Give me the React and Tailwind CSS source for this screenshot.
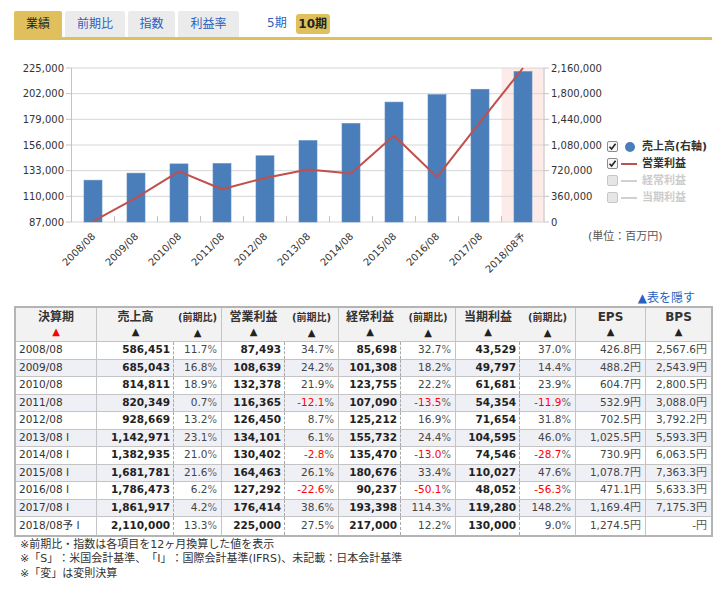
import React from "react";

const sales = [586451, 685043, 814811, 820349, 928669, 1142971, 1382935, 1681781, 1786473, 1861917, 2110000];
const op = [87493, 108639, 132378, 116365, 126450, 134101, 130402, 164463, 127292, 176414, 225000];
const labels = ["2008/08", "2009/08", "2010/08", "2011/08", "2012/08", "2013/08", "2014/08", "2015/08", "2016/08", "2017/08", "2018/08予"];
const leftTicks = ["225,000", "202,000", "179,000", "156,000", "133,000", "110,000", "87,000"];
const rightTicks = ["2,160,000", "1,800,000", "1,440,000", "1,080,000", "720,000", "360,000", "0"];

const rows = [
  ["2008/08", "586,451", "11.7", "87,493", "34.7", "85,698", "32.7", "43,529", "37.0", "426.8", "2,567.6"],
  ["2009/08", "685,043", "16.8", "108,639", "24.2", "101,308", "18.2", "49,797", "14.4", "488.2", "2,543.9"],
  ["2010/08", "814,811", "18.9", "132,378", "21.9", "123,755", "22.2", "61,681", "23.9", "604.7", "2,800.5"],
  ["2011/08", "820,349", "0.7", "116,365", "-12.1", "107,090", "-13.5", "54,354", "-11.9", "532.9", "3,088.0"],
  ["2012/08", "928,669", "13.2", "126,450", "8.7", "125,212", "16.9", "71,654", "31.8", "702.5", "3,792.2"],
  ["2013/08 I", "1,142,971", "23.1", "134,101", "6.1", "155,732", "24.4", "104,595", "46.0", "1,025.5", "5,593.3"],
  ["2014/08 I", "1,382,935", "21.0", "130,402", "-2.8", "135,470", "-13.0", "74,546", "-28.7", "730.9", "6,063.5"],
  ["2015/08 I", "1,681,781", "21.6", "164,463", "26.1", "180,676", "33.4", "110,027", "47.6", "1,078.7", "7,363.3"],
  ["2016/08 I", "1,786,473", "6.2", "127,292", "-22.6", "90,237", "-50.1", "48,052", "-56.3", "471.1", "5,633.3"],
  ["2017/08 I", "1,861,917", "4.2", "176,414", "38.6", "193,398", "114.3", "119,280", "148.2", "1,169.4", "7,175.3"],
  ["2018/08予 I", "2,110,000", "13.3", "225,000", "27.5", "217,000", "12.2", "130,000", "9.0", "1,274.5", "-"],
];

const colW = [81, 77, 48, 63, 54, 62, 55, 64, 56, 70, 65];

// グラフの座標
const X0 = 71.5;
const STEP = 43;
const TOP = 68;
const BOT = 222;
const H = BOT - TOP;
const gridY = [0, 1, 2, 3, 4, 5, 6].map((i) => TOP + (H / 6) * i);

const Chart = () => {
  const pts = op
    .map((v, i) => `${X0 + STEP * (i + 0.5)},${BOT - ((v - 87000) * H) / 138000}`)
    .join(" ");
  return (
    <svg width="588" height="250" viewBox="0 40 588 250" className="block shrink-0 overflow-visible">
      <rect x={X0 + STEP * 10} y={TOP} width={STEP} height={H} fill="#fdebe9" />
      {gridY.map((y, i) => (
        <g key={i}>
          <line x1={X0} x2={544} y1={y} y2={y} stroke="#d6d6d6" />
          <line x1={66} x2={X0} y1={y} y2={y} stroke="#c4c4c4" />
          <line x1={544} x2={549} y1={y} y2={y} stroke="#c4c4c4" />
          <text x={64} y={y + 3.5} textAnchor="end" fontSize="10" fill="#333" fontFamily="DejaVu Sans, sans-serif">
            {leftTicks[i]}
          </text>
          <text x={551} y={y + 3.5} fontSize="10" fill="#333" fontFamily="DejaVu Sans, sans-serif">
            {rightTicks[i]}
          </text>
        </g>
      ))}
      <line x1={X0} x2={X0} y1={TOP} y2={BOT} stroke="#c4c4c4" />
      <line x1={544} x2={544} y1={TOP} y2={BOT} stroke="#c4c4c4" />
      {[1, 2, 3, 4, 5, 6, 7, 8, 9, 10].map((k) => (
        <line key={k} x1={X0 + STEP * k} x2={X0 + STEP * k} y1={BOT - 6} y2={BOT} stroke="#c4c4c4" />
      ))}
      {sales.map((s, i) => {
        const h = (s * H) / 2160000;
        return <rect key={i} x={X0 + STEP * (i + 0.5) - 9} y={BOT - h} width={18} height={h} fill="#4a7ebb" stroke="#5d8cc4" strokeWidth="0.6" />;
      })}
      <polyline points={pts} fill="none" stroke="#c0504d" strokeWidth="2" strokeLinejoin="round" />
      {labels.map((l, i) => {
        const x = X0 + STEP * (i + 0.5) + 3;
        const y = 237;
        return (
          <text key={l} x={x} y={y} textAnchor="end" fontSize="10" fill="#333" fontFamily="DejaVu Sans, Noto Sans CJK JP, sans-serif" transform={`rotate(-45 ${x} ${y})`}>
            {l}
          </text>
        );
      })}
    </svg>
  );
};

const Check = ({ on }) => (
  <span
    className={
      on
        ? "w-[11px] h-[11px] rounded-[2px] border border-[#8c8c8c] bg-[#f6f6f6] flex items-center justify-center"
        : "w-[11px] h-[11px] rounded-[2px] border border-[#c6c6c6] bg-[#e6e6e6]"
    }
  >
    {on && (
      <svg width="9" height="9" viewBox="0 0 9 9">
        <path d="M1.5 4.8 L3.6 7 L7.6 1.8" fill="none" stroke="#222" strokeWidth="1.6" />
      </svg>
    )}
  </span>
);

const Legend = () => (
  <div className="flex flex-col pt-[98px] text-[11px] leading-[17px] font-bold">
    <div className="flex items-center h-[17px] pl-[19px] gap-[7px]">
      <Check on />
      <span className="w-[10px] h-[10px] rounded-full bg-[#4a7ebb]" />
      <span className="text-[#333]">売上高(右軸)</span>
    </div>
    <div className="flex items-center h-[17px] pl-[19px] gap-[3px]">
      <Check on />
      <span className="w-[16px] h-[2px] bg-[#c0504d]" />
      <span className="text-[#333] ml-[2px]">営業利益</span>
    </div>
    <div className="flex items-center h-[17px] pl-[19px] gap-[3px]">
      <Check />
      <span className="w-[16px] h-[2px] bg-[#d0d0d0]" />
      <span className="text-[#cccccc] ml-[2px]">経常利益</span>
    </div>
    <div className="flex items-center h-[17px] pl-[19px] gap-[3px]">
      <Check />
      <span className="w-[16px] h-[2px] bg-[#d0d0d0]" />
      <span className="text-[#cccccc] ml-[2px]">当期利益</span>
    </div>
    <div className="mt-[22px] font-normal text-[#555]">(単位：百万円)</div>
  </div>
);

const Pct = ({ v }) => {
  const neg = v.startsWith("-");
  return (
    <span>
      <span className={neg ? "text-[#ff0000]" : "text-[#444]"}>{v}</span>
      <span className="text-[10px] text-[#666]">%</span>
    </span>
  );
};

const Yen = ({ v }) => (
  <span className="text-[#444]">
    {v}
    <span className="text-[11px] text-[#555]">円</span>
  </span>
);

const heads = [
  ["決算期", "big", true],
  ["売上高", "big"],
  ["(前期比)", "small"],
  ["営業利益", "big"],
  ["(前期比)", "small"],
  ["経常利益", "big"],
  ["(前期比)", "small"],
  ["当期利益", "big"],
  ["(前期比)", "small"],
  ["EPS", "big"],
  ["BPS", "big"],
];

export default function App() {
  return (
    <div className="w-[726px] h-[590px] bg-white overflow-hidden font-['DejaVu_Sans','Noto_Sans_CJK_JP',sans-serif] text-[#333] [text-spacing-trim:space-all]">
      {/* タブ */}
      <div className="pt-[11px] px-[14px]">
        <div className="flex items-end w-[698px] border-b-[3px] border-[#dfc05c] text-[12px]">
          <div className="w-[48px] h-[26px] flex items-center justify-center bg-[#dfc05c] rounded-t-[2px] text-[#222]">業績</div>
          <div className="w-[60px] h-[26px] ml-[3px] flex items-center justify-center bg-[#ebebeb] rounded-t-[2px] text-[#2b5fc0]">前期比</div>
          <div className="w-[47px] h-[26px] ml-[3px] flex items-center justify-center bg-[#ebebeb] rounded-t-[2px] text-[#2b5fc0]">指数</div>
          <div className="w-[61px] h-[26px] ml-[3px] flex items-center justify-center bg-[#ebebeb] rounded-t-[2px] text-[#2b5fc0]">利益率</div>
          <div className="self-stretch flex items-center pb-[3px] ml-[28px] text-[#2b5fc0]">5期</div>
          <div className="mb-[3px] ml-[9px] w-[34px] h-[20px] flex items-center justify-center rounded-[3px] bg-[#dfc05c] font-bold text-[#222]">10期</div>
        </div>
      </div>

      {/* グラフ */}
      <div className="flex h-[250px]">
        <Chart />
        <Legend />
      </div>

      {/* 表 */}
      <div className="px-[14px]">
        <div className="h-[16px] flex justify-end pr-[17px] text-[12px] leading-[16px] text-[#2b5fc0]">▲表を隠す</div>
        <table className="w-[699px] table-fixed border-separate border-spacing-0 border-2 border-[#b4b4b4]">
          <colgroup>
            {colW.map((w, i) => (
              <col key={i} style={{ width: w }} />
            ))}
          </colgroup>
          <thead>
            <tr>
              {heads.map(([t, kind, red], i) => (
                <th
                  key={i}
                  className={
                    (i === 10 ? "" : kind === "big" && i > 0 && i < 9 ? "" : "border-r ") +
                    "border-b border-[#c4c4c4] bg-[#f2f2f2] h-[34px] p-0 align-top font-bold text-[#333]"
                  }
                >
                  <div className="flex flex-col items-center pt-[2px]">
                    <span className={kind === "big" ? "text-[12px] leading-[14px]" : "text-[10px] leading-[14px] mt-[1px]"}>{t}</span>
                    <span className={red ? "text-[10px] leading-[14px] mt-[1px] text-[#ff0000]" : "text-[10px] leading-[14px] mt-[1px] text-[#222]"}>▲</span>
                  </div>
                </th>
              ))}
            </tr>
          </thead>
          <tbody className="text-[10.5px]">
            {rows.map((r, ri) => (
              <tr key={ri} className={ri % 2 === 1 ? "bg-[#efeff6]" : "bg-white"}>
                {r.map((c, ci) => {
                  const last = ri === rows.length - 1;
                  const bb = last ? "" : "border-b ";
                  if (ci === 0)
                    return (
                      <td key={ci} className={bb + "border-r border-[#c4c4c4] h-[17.5px] p-0 pl-[3px] text-left text-[#333] whitespace-nowrap"}>
                        {c}
                      </td>
                    );
                  if (ci >= 9)
                    return (
                      <td key={ci} className={bb + (ci === 9 ? "border-r " : "") + "border-[#c4c4c4] h-[17.5px] p-0 pr-[4px] text-right whitespace-nowrap"}>
                        <Yen v={c} />
                      </td>
                    );
                  if (ci % 2 === 1)
                    return (
                      <td key={ci} className={bb + "border-[#c4c4c4] h-[17.5px] p-0 pr-[4px] text-right font-bold text-[#222] whitespace-nowrap relative"}>
                        {c}
                        <span className="absolute right-0 top-0 bottom-0 border-r border-dashed border-[#a8a8a8]" />
                      </td>
                    );
                  return (
                    <td key={ci} className={bb + "border-r border-[#c4c4c4] h-[17.5px] p-0 pr-[4px] text-right whitespace-nowrap"}>
                      <Pct v={c} />
                    </td>
                  );
                })}
              </tr>
            ))}
          </tbody>
        </table>
      </div>

      {/* 注記 */}
      <div className="pl-[20px] pt-[1px] text-[11px] leading-[14.5px] text-[#333]">
        <div>※前期比・指数は各項目を12ヶ月換算した値を表示</div>
        <div>※「S」：米国会計基準、「I」：国際会計基準(IFRS)、未記載：日本会計基準</div>
        <div>※「変」は変則決算</div>
      </div>
    </div>
  );
}
